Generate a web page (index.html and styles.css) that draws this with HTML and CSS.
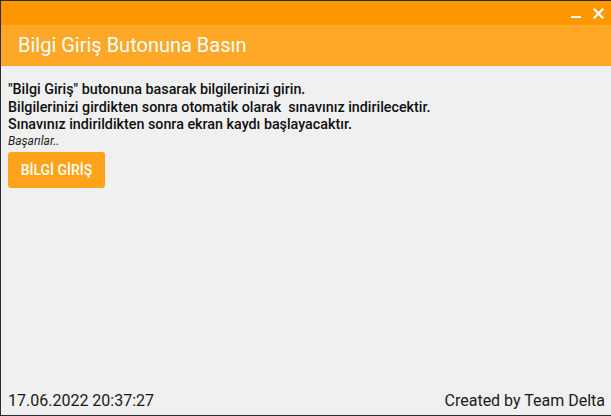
FILE: index.html
```html
<!DOCTYPE html>
<html lang="tr">
<head>
<meta charset="utf-8">
<link rel="stylesheet" href="styles.css">
</head>
<body>
<div class="window">
  <div class="titlebar">
    <span class="tb-btn tb-min"></span>
    <span class="tb-btn tb-close">
      <svg width="11" height="11" viewBox="0 0 11 11"><path d="M1.5 1.5L9.5 9.5M9.5 1.5L1.5 9.5" stroke="#fff" stroke-width="2.2" stroke-linecap="square"/></svg>
    </span>
  </div>
  <div class="header">Bilgi Giriş Butonuna Basın</div>
  <div class="content">
    <p class="line">"Bilgi Giriş" butonuna basarak bilgilerinizi girin.</p>
    <p class="line">Bilgilerinizi girdikten sonra otomatik olarak&nbsp; sınavınız indirilecektir.</p>
    <p class="line">Sınavınız indirildikten sonra ekran kaydı başlayacaktır.</p>
    <p class="note">Başarılar..</p>
    <button class="btn">BİLGİ GİRİŞ</button>
  </div>
  <div class="footer">
    <span>17.06.2022 20:37:27</span>
    <span>Created by Team Delta</span>
  </div>
</div>
</body>
</html>
```
FILE: styles.css
```css
html, body {
  margin: 0;
  padding: 0;
  width: 611px;
  height: 416px;
  overflow: hidden;
}
body {
  font-family: Roboto, "Liberation Sans", sans-serif;
  background: #f0f0f0;
}
.window {
  box-sizing: border-box;
  width: 611px;
  height: 416px;
  border-top: 1px solid #2b2b2b;
  border-left: 1px solid #2b2b2b;
  border-bottom: 1px solid #2b2b2b;
  display: flex;
  flex-direction: column;
  background: #f0f0f0;
}
.titlebar {
  height: 24px;
  background: #ff9800;
  display: flex;
  justify-content: flex-end;
  align-items: center;
  gap: 12px;
  padding-right: 7px;
}
.tb-btn {
  display: flex;
  align-items: center;
  justify-content: center;
  width: 11px;
  height: 11px;
}
.tb-min::after {
  content: "";
  display: block;
  width: 10px;
  height: 2px;
  background: #fff;
  margin-top: 8px;
}
.header {
  height: 41px;
  background: #ffa726;
  color: #fff;
  font-size: 20px;
  display: flex;
  align-items: center;
  padding-left: 17px;
  padding-bottom: 1px;
  box-sizing: border-box;
}
.content {
  flex: 1;
  padding: 15px 7px 0;
  color: #111;
}
.line {
  margin: 0;
  font-size: 14.3px;
  font-weight: 500;
  line-height: 17.5px;
}
.note {
  margin: 0;
  font-size: 12px;
  font-style: italic;
  line-height: 14px;
  color: #222;
}
.btn {
  margin-top: 4px;
  margin-left: 0;
  width: 97px;
  height: 36px;
  border: none;
  border-radius: 3px;
  background: #ffa31a;
  color: #fff;
  font-family: Roboto, "Liberation Sans", sans-serif;
  font-weight: 500;
  font-size: 14px;
  padding: 0;
}
.footer {
  display: flex;
  justify-content: space-between;
  padding: 0 6px 4px 7px;
  font-size: 16px;
  color: #1a1a1a;
  line-height: 20px;
}
```
